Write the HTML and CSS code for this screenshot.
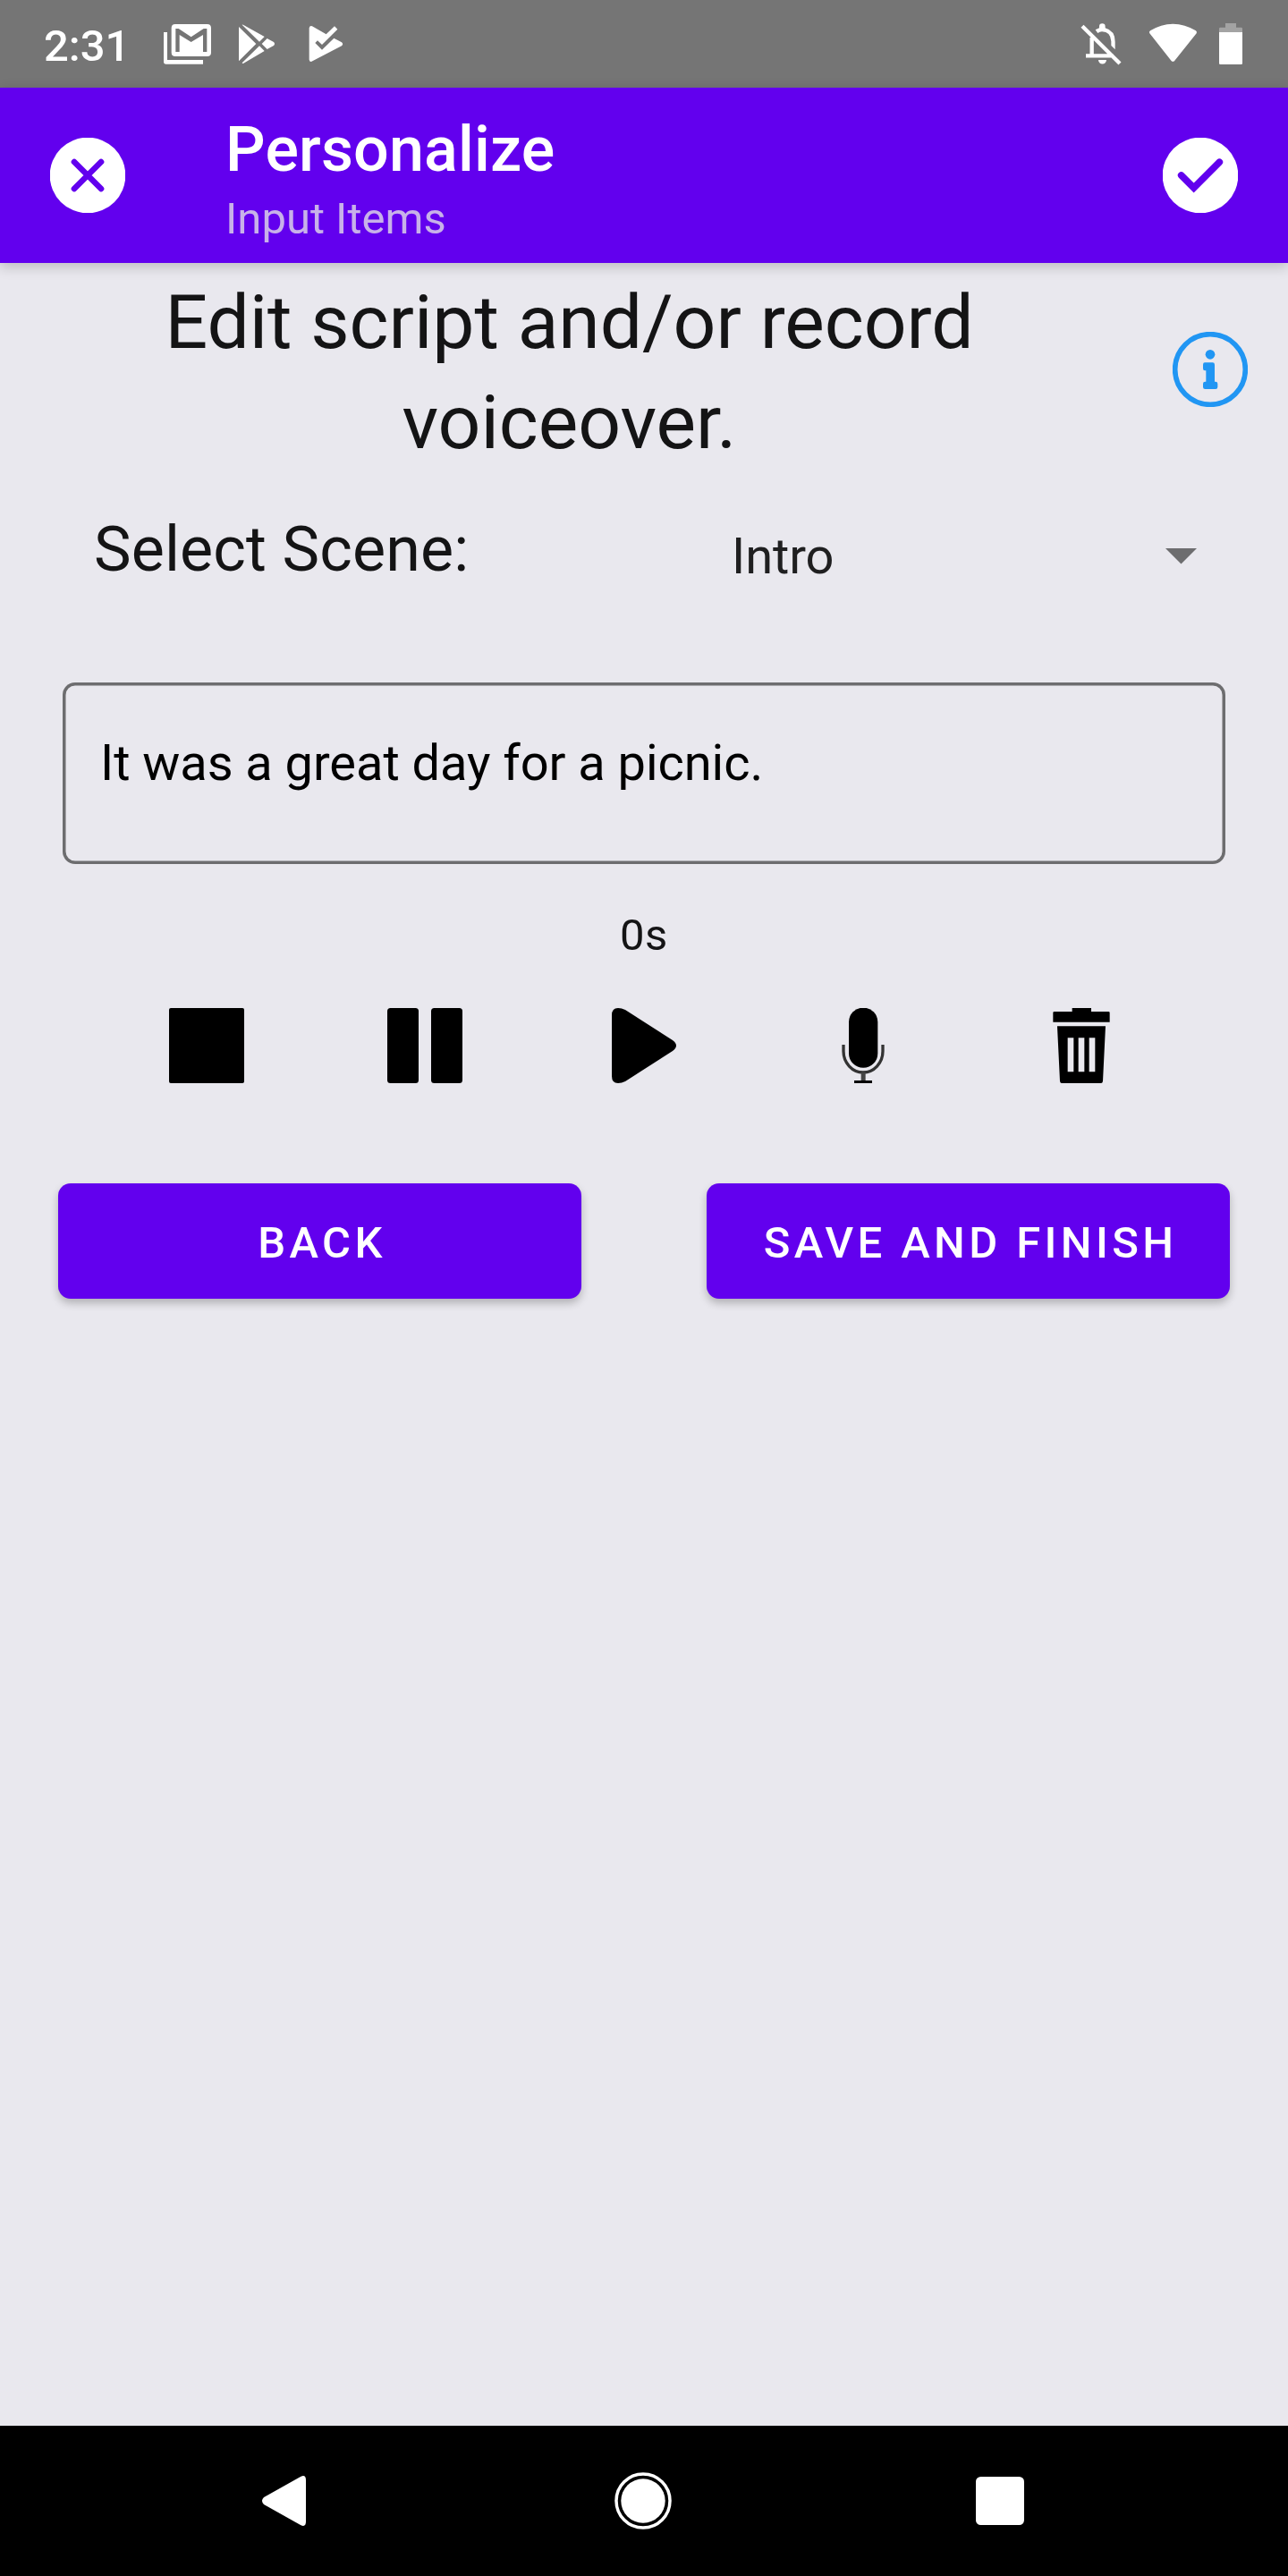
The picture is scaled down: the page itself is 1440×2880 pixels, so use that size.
FILE: index.html
```html
<!DOCTYPE html>
<html lang="en">
<head>
<meta charset="utf-8">
<title>Personalize</title>
<link rel="stylesheet" href="styles.css">
</head>
<body>
<div class="screen">
  <div class="status-bar">
    <span class="time">2:31</span>
    <div class="notifications">
      <svg width="60" height="98" viewBox="420 -42 180 294" fill="#fff"><path d="M429 66h12v93h120v14H437q-8 0-8-8z"/><path fill-rule="evenodd" d="M468 39h107q13 0 13 13v82q0 13-13 13H468q-13 0-13-13V52q0-13 13-13zM469 132h13V75l39 24 40-24v57h13V54h-11l-42 28-42-28h-10z"/></svg>
      <svg width="48" height="98" viewBox="672 -42 144 294" fill="#fff"><path d="M681 48v115l58-58zM692 41q2-2 5 1l70 39-17 17zM776 87l22 12q6 6 0 12l-22 12-18-18zM692 169q2 4 5 1l70-41-17-17z"/></svg>
      <svg width="46" height="98" viewBox="906 -42 138 294" fill="#fff"><path d="M917 158V52q2-9 10-6l47 27 28-27 10 10-52 52-15-14-8 8 23 23 40-39 26 14q7 6 0 12l-98 51q-9 5-11-5z"/></svg>
    </div>
    <div class="system">
      <svg class="bell" width="52" height="98" viewBox="315 0 156 294" fill="#fff"><path d="M330 88l126 125M362 126v60M342 187h92" fill="none" stroke="#fff" stroke-width="13"/><path d="M374 100l13-6v-5a10 10 0 0 1 20 0v5q33 9 33 46v26l-13-13v-14q-2-33-31-33-8 0-14 5zM384 201h27a13.500 13.500 0 0 1-27 0z"/></svg>
      <svg class="wifi" width="57" height="98" viewBox="549 0 171 294" fill="#fff"><path d="M556 112q-4-4 2-9 36-23 76-23t77 23q5 5 2 9l-73 91q-6 7-12 0z"/></svg>
      <svg width="28" height="98" viewBox="786 0 84 294"><path fill="#a3a3a3" d="M789 108V96q0-4 4-4h17V78h36v14h17q4 0 4 4v12z"/><path fill="#fff" d="M789 108h78v104q0 4-4 4h-70q-4 0-4-4z"/></svg>
    </div>
  </div>
  <header class="toolbar">
    <svg class="icon" viewBox="48 420 252 252"><circle cx="174" cy="546" r="127" fill="#fff"/><path d="M129 501l90 90M219 501l-90 90" stroke="#6200ee" stroke-width="20"  stroke-linecap="round"/></svg>
    <div class="titles">
      <h1>Personalize</h1>
      <p>Input Items</p>
    </div>
    <svg class="icon" viewBox="600 462 252 252"><circle cx="726" cy="588" r="127" fill="#fff"/><path d="M662 588l42 42 86-86" fill="none" stroke="#6200ee" stroke-width="23" stroke-linecap="round"/></svg>
  </header>
  <main>
    <div class="intro">
      <h2>Edit script and/or record<br>voiceover.</h2>
      <svg class="icon" viewBox="633 1113 252 252" fill="#2196f3"><circle cx="759" cy="1239" r="118" fill="none" stroke="#2196f3" stroke-width="17"/><circle cx="759" cy="1189" r="16"/><path d="M741 1216h26q7 0 7 7v57h3q7 0 7 7v11q0 7-7 7h-35q-7 0-7-7v-11q0-7 7-7h3v-37h-4q-6 0-6-7v-13q0-7 6-7z"/></svg>
    </div>
    <div class="scene-row">
      <span class="scene-label">Select Scene:</span>
      <div class="spinner"><span>Intro</span><svg width="35" height="18" viewBox="0 0 35 18"><path d="M0 0h35L17.500 17.500z" fill="#6d6d6f"/></svg></div>
    </div>
    <div class="field">It was a great day for a picnic.</div>
    <div class="timer">0s</div>
    <div class="controls">
      <svg class="icon" viewBox="0 0 84 84"><rect width="84" height="84" rx="2"/></svg>
      <svg class="icon" viewBox="0 0 84 84"><rect width="35" height="84" rx="3.500"/><rect x="49" width="35" height="84" rx="3.500"/></svg>
      <svg class="icon play" viewBox="0 0 84 84"><path d="M7 8q0-8 7-8 4 0 8 2l53 34q8 6 0 12L22 82q-4 2-8 2-7 0-7-8z"/></svg>
      <svg class="icon" viewBox="69 81 252 252"><rect x="147" y="80" width="97" height="201" rx="48"/><path d="M129 204v22a66 71 0 0 0 132 0v-22" fill="none" stroke="#333" stroke-width="10"/><path d="M188 297h15v27h-15z" fill="#444"/><path d="M165 324h60v10h-60z"/></svg>
      <svg class="icon" viewBox="801 81 252 252"><path d="M896 81h64v12h58q4 0 4 4v31H832V97q0-4 4-4h60z"/><path fill-rule="evenodd" d="M846 142h162l-9 184q-1 7-6 7H861q-5 0-6-7zM881 181h20v114h-20zM917 181h20v114h-20zM953 181h20v114h-20z"/></svg>
    </div>
    <div class="actions">
      <button>BACK</button>
      <button>SAVE AND FINISH</button>
    </div>
  </main>
  <nav class="nav-bar">
    <svg width="49" height="58" viewBox="0 0 49 58"><path d="M43 2q6-3 6 4v46q0 7-6 4L2 33q-4-4 0-8z" fill="#fff"/></svg>
    <svg class="home" width="64" height="64" viewBox="0 0 64 64"><circle cx="32" cy="32" r="30" fill="none" stroke="#fff" stroke-width="3.500"/><circle cx="32" cy="32" r="24.700" fill="#fff"/></svg>
    <svg width="54" height="54" viewBox="0 0 54 54"><rect width="54" height="54" rx="5.500" fill="#fff"/></svg>
  </nav>
</div>
</body>
</html>
```
FILE: styles.css
```css
* {
  box-sizing: border-box;
}

body {
  margin: 0;
  font-family: Roboto, "Liberation Sans", sans-serif;
  color: #141415;
}

h1, h2, p {
  margin: 0;
  font-weight: 400;
}

svg {
  display: block;
  flex: none;
}

.screen {
  width: 1440px;
  height: 2880px;
  display: flex;
  flex-direction: column;
  background: #e9e8ee;
}

.icon {
  width: 84px;
  height: 84px;
}

.status-bar {
  height: 98px;
  flex: none;
  display: flex;
  padding: 0 50px 0 49px;
  background: #757575;
}

.time {
  width: 131px;
  font-size: 49px;
  font-weight: 500;
  line-height: 103px;
  color: #fff;
}

.notifications {
  display: flex;
}

.notifications svg:not(:last-child) {
  margin-right: 24px;
}

.notifications svg:nth-child(2) {
  margin-right: 30px;
}

.system {
  display: flex;
  margin-left: auto;
}

.bell {
  margin-right: 26px;
}

.wifi {
  margin-right: 22px;
}

.toolbar {
  height: 196px;
  flex: none;
  display: flex;
  align-items: center;
  padding: 0 56px;
  background: #6200ee;
  box-shadow: 0 4px 14px rgba(0, 0, 0, 0.2);
}

.titles {
  flex: 1;
  display: flex;
  flex-direction: column;
  gap: 8px;
  padding: 8px 0 0 112px;
}

h1 {
  font-size: 70px;
  font-weight: 500;
  line-height: 82px;
  letter-spacing: 0.15px;
  color: #fff;
}

.titles p {
  font-size: 49px;
  line-height: 58px;
  color: #c8b1e9;
}

main {
  flex: 1;
}

.intro {
  display: flex;
  padding: 11px 45px 0 0;
}

h2 {
  flex: 1;
  margin-right: 38px;
  font-size: 84px;
  line-height: 112px;
  letter-spacing: -0.05px;
  text-align: center;
}

.intro .icon {
  margin-top: 66px;
}

.scene-row {
  height: 98px;
  margin-top: 44px;
  padding: 0 102px 0 105px;
  display: flex;
  justify-content: space-between;
}

.scene-label {
  font-size: 70px;
  line-height: 82px;
  letter-spacing: 0.12px;
}

.spinner {
  width: 520px;
  display: flex;
  align-items: center;
  justify-content: space-between;
  font-size: 56px;
  line-height: 66px;
  letter-spacing: -0.1px;
  color: #1f1f20;
}

.field {
  height: 203px;
  margin: 92px 70px 0;
  padding: 57px 42px 0;
  border-radius: 14px;
  box-shadow: inset 0 0 0 3.5px #6d6d6f;
  font-size: 56px;
  line-height: 66px;
  letter-spacing: -0.06px;
  color: #000;
}

.timer {
  margin-top: 51px;
  font-size: 49px;
  line-height: 58px;
  letter-spacing: 0.5px;
  text-align: center;
}

.controls {
  display: flex;
  justify-content: space-between;
  margin-top: 52px;
  padding: 0 189px;
}

.play {
  margin-right: 2px;
}

.actions {
  display: flex;
  justify-content: space-between;
  margin-top: 112px;
  padding: 0 65px;
}

.actions button {
  width: 585px;
  height: 129px;
  padding: 0 0 0 5px;
  border: 0;
  border-radius: 14px;
  background: #6200ee;
  box-shadow: 0 5px 10px rgba(0, 0, 0, 0.24);
  font: 500 49px/134px Roboto, "Liberation Sans", sans-serif;
  letter-spacing: 4.375px;
  color: #fff;
}

.nav-bar {
  height: 168px;
  flex: none;
  display: flex;
  align-items: center;
  justify-content: space-between;
  padding: 0 295px 0 293px;
  background: #000;
}

.home {
  margin-left: 4px;
}
```
